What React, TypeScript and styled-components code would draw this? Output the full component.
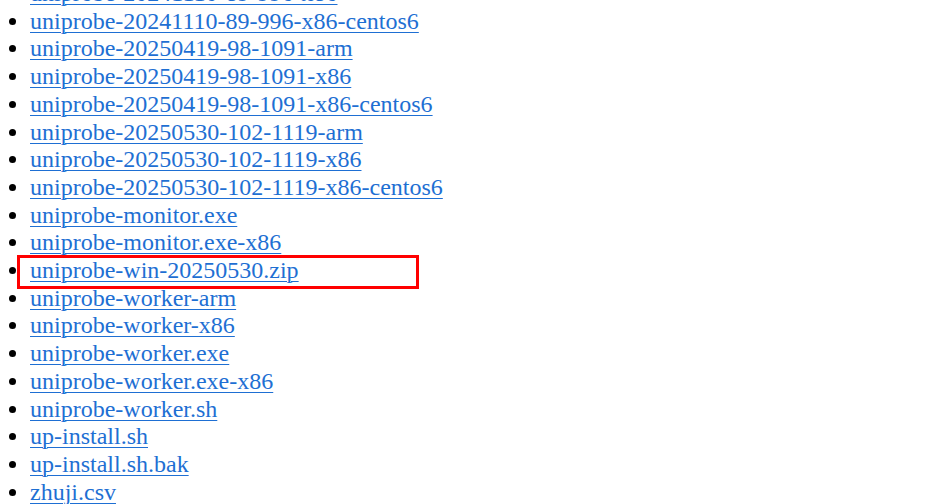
import React from "react";
import styled, { createGlobalStyle } from "styled-components";

const Global = createGlobalStyle`
  html, body { margin: 0; padding: 0; background: #ffffff; }
  body { overflow: hidden; }
`;

const Page = styled.div`
  position: relative;
  width: 946px;
  height: 504px;
  overflow: hidden;
  background: #ffffff;
`;

const List = styled.ul`
  margin: -20px 0 0 0;
  padding: 0 0 0 30px;
  list-style: disc;
  font-family: "Liberation Serif", "Times New Roman", serif;
  font-size: 24px;
  line-height: 27.7px;
  color: #000;
`;

const Item = styled.li``;

const Link = styled.a`
  color: #1e6fd3;
  text-decoration: underline;
  text-decoration-thickness: 1px;
  text-underline-offset: 3px;
`;

const Highlight = styled.div`
  position: absolute;
  left: 17px;
  top: 255px;
  width: 402px;
  height: 34px;
  box-sizing: border-box;
  border: 3px solid #ff0000;
  pointer-events: none;
`;

const files = [
  "uniprobe-20241110-89-996-x86",
  "uniprobe-20241110-89-996-x86-centos6",
  "uniprobe-20250419-98-1091-arm",
  "uniprobe-20250419-98-1091-x86",
  "uniprobe-20250419-98-1091-x86-centos6",
  "uniprobe-20250530-102-1119-arm",
  "uniprobe-20250530-102-1119-x86",
  "uniprobe-20250530-102-1119-x86-centos6",
  "uniprobe-monitor.exe",
  "uniprobe-monitor.exe-x86",
  "uniprobe-win-20250530.zip",
  "uniprobe-worker-arm",
  "uniprobe-worker-x86",
  "uniprobe-worker.exe",
  "uniprobe-worker.exe-x86",
  "uniprobe-worker.sh",
  "up-install.sh",
  "up-install.sh.bak",
  "zhuji.csv",
];

export default function App() {
  return (
    <Page>
      <Global />
      <List>
        {files.map((f) => (
          <Item key={f}>
            <Link href="#">{f}</Link>
          </Item>
        ))}
      </List>
      <Highlight />
    </Page>
  );
}
